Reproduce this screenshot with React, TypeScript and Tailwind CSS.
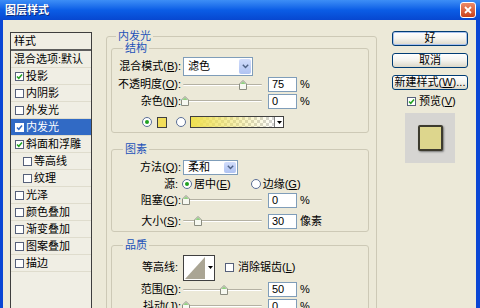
import React from "react";

type Item = { t: string; c?: boolean; sel?: boolean; ind?: boolean };

const items: Item[] = [
  { t: "投影", c: true },
  { t: "内阴影" },
  { t: "外发光" },
  { t: "内发光", c: true, sel: true },
  { t: "斜面和浮雕", c: true },
  { t: "等高线", ind: true },
  { t: "纹理", ind: true },
  { t: "光泽" },
  { t: "颜色叠加" },
  { t: "渐变叠加" },
  { t: "图案叠加" },
  { t: "描边" },
];

const Check = ({ on, sel }: { on?: boolean; sel?: boolean }) => (
  <span
    className={`flex h-[9px] w-[9px] shrink-0 items-center justify-center border ${
      sel ? "border-white bg-white" : "border-[#56607a] bg-white"
    }`}
  >
    {on && (
      <svg width="7" height="7" viewBox="0 0 7 7">
        <path d="M1 3.4L2.8 5.3L6 1.5" fill="none" stroke={sel ? "#316ac5" : "#21a121"} strokeWidth="1.5" />
      </svg>
    )}
  </span>
);

const Radio = ({ on }: { on?: boolean }) => (
  <span className="flex h-[10px] w-[10px] shrink-0 items-center justify-center rounded-full border border-[#5a6e96] bg-white">
    {on && <span className="h-[4px] w-[4px] rounded-full bg-[#21a121]" />}
  </span>
);

const Arrow = () => (
  <span className="m-[1px] flex w-[12px] items-center justify-center rounded-[2px] bg-linear-to-b from-[#d2ddfb] to-[#afc3f2]">
    <svg width="7" height="5" viewBox="0 0 7 5">
      <path d="M0.8 0.8L3.5 3.6L6.2 0.8" fill="none" stroke="#4d6185" strokeWidth="1.4" />
    </svg>
  </span>
);

const Select = ({ text, w, h }: { text: string; w: string; h: string }) => (
  <div className={`ml-[2px] flex border border-[#7f9db9] bg-white ${w} ${h}`}>
    <span className="flex flex-1 items-center pl-[4px]">{text}</span>
    <Arrow />
  </div>
);

// thumb offset in px from the track start
const Slider = ({ pos }: { pos: number }) => (
  <div className="relative ml-[2px] flex h-[12px] w-[79px] items-center">
    <div className="h-[2px] w-full rounded-full border-b border-white bg-[#b4b1a3]" />
    <svg className="absolute top-[1px]" style={{ left: pos - 4 }} width="8" height="10" viewBox="0 0 8 10">
      <path d="M4 0.5L7.5 4V9.5H0.5V4Z" fill="#f6f8f0" stroke="#8a8c80" />
      <path d="M4 1.5L6.5 4H1.5Z" fill="#8fd07e" />
    </svg>
  </div>
);

const Num = ({ v }: { v: string }) => (
  <div className="ml-[6px] flex h-[15px] w-[29px] items-center border border-[#7f9db9] bg-white pl-[3px]">{v}</div>
);

const Label = ({ w, children }: { w: string; children: React.ReactNode }) => (
  <span className={`shrink-0 whitespace-nowrap text-right ${w}`}>{children}</span>
);

const SliderRow = ({ label, pos, v, unit, h }: { label: React.ReactNode; pos: number; v: string; unit: string; h: string }) => (
  <div className={`flex items-center ${h}`}>
    <Label w="w-[69px]">{label}</Label>
    <Slider pos={pos} />
    <Num v={v} />
    <span className="ml-[3px]">{unit}</span>
  </div>
);

const Group = ({ title, mt, children }: { title: string; mt: string; children: React.ReactNode }) => (
  <fieldset className={`w-[258px] rounded-[3px] border border-[#cdc9b6] ${mt}`}>
    <legend className="ml-[11px] px-[2px] leading-[12px] text-[#2352b8]">{title}</legend>
    {children}
  </fieldset>
);

const Button = ({ children, def }: { children: React.ReactNode; def?: boolean }) => (
  <div
    className={`flex h-[15px] w-[76px] items-center justify-center rounded-[3px] border border-[#003c74] bg-linear-to-b from-white via-[#f4f3ee] to-[#dcd8c8] ${
      def ? "shadow-[inset_0_0_0_1px_#a9c2ee]" : ""
    }`}
  >
    {children}
  </div>
);

export default function App() {
  return (
    <div className="h-[308px] w-[480px] overflow-hidden bg-[#ece9d8] font-[family-name:'Liberation_Sans','Noto_Sans_CJK_SC',sans-serif] text-[11px] leading-[13px] text-black">
      {/* title bar */}
      <div className="flex h-[20px] items-center justify-between bg-linear-to-b from-[#3d8ef6] via-[#0b5de6] to-[#0747d0] pl-[5px] pr-[4px]">
        <span className="font-bold text-white [text-shadow:1px_1px_0_#0a2a80]">图层样式</span>
        <span className="flex h-[16px] w-[16px] items-center justify-center rounded-[3px] border border-white bg-linear-to-b from-[#ec8a68] to-[#c83f16]">
          <svg width="8" height="8" viewBox="0 0 8 8">
            <path d="M1 1L7 7M7 1L1 7" stroke="white" strokeWidth="1.8" />
          </svg>
        </span>
      </div>

      <div className="flex h-[288px] items-start border-l-[3px] border-r-[4px] border-[#0a46d4] pl-[7px]">
        {/* style list */}
        <div className="mt-[12px] h-[290px] w-[82px] shrink-0 border border-[#3e3e3e] bg-[#f0eee4]">
          <div className="flex h-[18px] items-center border-b-2 border-[#5c5c5c] pl-[3px]">样式</div>
          <div className="flex h-[17px] items-center border-b border-[#dfdccd] pl-[3px]">混合选项:默认</div>
          {items.map((it) => (
            <div
              key={it.t}
              className={`flex h-[17px] items-center border-b border-[#dfdccd] ${it.ind ? "pl-[12px]" : "pl-[4px]"} ${
                it.sel ? "bg-[#316ac5] text-white" : ""
              }`}
            >
              <Check on={it.c} sel={it.sel} />
              <span className="ml-[2px]">{it.t}</span>
            </div>
          ))}
        </div>

        {/* settings */}
        <fieldset className="ml-[14px] mt-[10px] w-[271px] shrink-0 rounded-[3px] border border-[#cdc9b6]">
          <legend className="ml-[9px] px-[2px] leading-[12px] text-[#2352b8]">内发光</legend>
          <div className="pl-[4px] pr-[7px]">
            <Group title="结构" mt="mt-0">
              <div className="pb-[1px] pt-[3px]">
                <div className="flex h-[19px] items-center">
                  <Label w="w-[69px]">混合模式(<u>B</u>):</Label>
                  <Select text="滤色" w="w-[70px]" h="h-[19px]" />
                </div>
                <SliderRow label={<>不透明度(<u>O</u>):</>} pos={60} v="75" unit="%" h="h-[17px]" />
                <SliderRow label={<>杂色(<u>N</u>):</>} pos={2} v="0" unit="%" h="h-[16px]" />
                <div className="mt-[4px] flex h-[18px] items-center pl-[30px]">
                  <Radio on />
                  <span className="ml-[5px] h-[11px] w-[10px] border border-[#404040] bg-[#f2de5a]" />
                  <span className="ml-[9px]">
                    <Radio />
                  </span>
                  <div className="ml-[4px] flex h-[12px] w-[94px] border border-[#404040]">
                    <div className="flex-1 bg-[repeating-conic-gradient(#d4d4d4_0_25%,#ffffff_0_50%)] bg-[length:6px_6px]">
                      <div className="h-full w-full bg-linear-to-r from-[#efe04f] to-transparent" />
                    </div>
                    <div className="flex w-[9px] items-center justify-center border-l border-[#808080] bg-white">
                      <svg width="5" height="3" viewBox="0 0 5 3">
                        <path d="M0 0H5L2.5 3Z" fill="#000" />
                      </svg>
                    </div>
                  </div>
                </div>
              </div>
            </Group>

            <Group title="图素" mt="mt-[10px]">
              <div className="pb-[2px] pt-[3px]">
                <div className="flex h-[18px] items-center">
                  <Label w="w-[69px]">方法(<u>Q</u>):</Label>
                  <Select text="柔和" w="w-[55px]" h="h-[15px]" />
                </div>
                <div className="flex h-[16px] items-center">
                  <Label w="w-[66px]">源:</Label>
                  <span className="ml-[4px]">
                    <Radio on />
                  </span>
                  <span className="ml-[2px]">居中(<u>E</u>)</span>
                  <span className="ml-[20px]">
                    <Radio />
                  </span>
                  <span className="ml-[2px]">边缘(<u>G</u>)</span>
                </div>
                <SliderRow label={<>阻塞(<u>C</u>):</>} pos={3} v="0" unit="%" h="h-[16px]" />
                <div className="mt-[5px]">
                  <SliderRow label={<>大小(<u>S</u>):</>} pos={15} v="30" unit="像素" h="h-[16px]" />
                </div>
              </div>
            </Group>

            <Group title="品质" mt="mt-[7px]">
              <div className="pt-[3px]">
                <div className="flex h-[27px] items-center">
                  <Label w="w-[66px]">等高线:</Label>
                  <div className="ml-[5px] flex h-[26px] w-[32px] border border-[#404040] bg-white">
                    <svg width="22" height="24" viewBox="0 0 22 24">
                      <path d="M1 23L21 1V23Z" fill="#aaa594" />
                    </svg>
                    <div className="flex flex-1 items-center justify-center">
                      <svg width="5" height="3" viewBox="0 0 5 3">
                        <path d="M0 0H5L2.5 3Z" fill="#000" />
                      </svg>
                    </div>
                  </div>
                  <span className="ml-[10px]">
                    <Check />
                  </span>
                  <span className="ml-[4px]">消除锯齿(<u>L</u>)</span>
                </div>
                <SliderRow label={<>范围(<u>R</u>):</>} pos={41} v="50" unit="%" h="h-[17px]" />
                <SliderRow label={<>抖动(<u>J</u>):</>} pos={3} v="0" unit="%" h="h-[16px]" />
              </div>
            </Group>
          </div>
        </fieldset>

        {/* buttons + preview */}
        <div className="ml-[15px] mt-[11px] w-[76px] shrink-0">
          <Button def>好</Button>
          <div className="mt-[7px]">
            <Button>取消</Button>
          </div>
          <div className="mt-[7px]">
            <Button>新建样式(<u>W</u>)...</Button>
          </div>
          <div className="ml-[15px] mt-[5px] flex h-[12px] items-center">
            <Check on />
            <span className="ml-[3px]">预览(<u>V</u>)</span>
          </div>
          <div className="ml-[13px] mt-[6px] flex h-[50px] w-[50px] items-center justify-center bg-[#d6d5d2]">
            <div className="h-[26px] w-[25px] rounded-[2px] border-2 border-[#3d3b2e] bg-[#ddd68d] shadow-[1px_1px_2px_#777]" />
          </div>
        </div>
      </div>
    </div>
  );
}
